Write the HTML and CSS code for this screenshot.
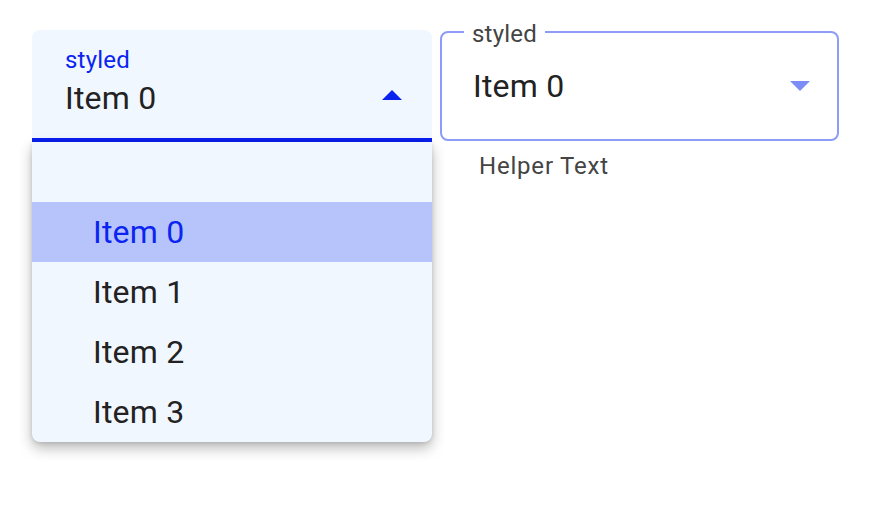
FILE: index.html
```html
<!DOCTYPE html>
<html>
<head>
<meta charset="utf-8">
<link rel="stylesheet" href="styles.css">
</head>
<body>
<div class="page">
  <div class="col-filled">
    <div class="filled">
      <div class="filled-label">styled</div>
      <div class="value-row">
        <span class="value">Item 0</span>
        <svg class="arrow" width="20" height="10" viewBox="0 0 20 10"><path d="M0 10 L10 0 L20 10 Z" fill="#0a22ee"/></svg>
      </div>
    </div>
    <div class="menu">
      <div class="menu-item empty"></div>
      <div class="menu-item selected">Item 0</div>
      <div class="menu-item">Item 1</div>
      <div class="menu-item">Item 2</div>
      <div class="menu-item">Item 3</div>
    </div>
  </div>
  <div class="col-outlined">
    <div class="outlined">
      <div class="outlined-label">styled</div>
      <div class="value-row outlined-row">
        <span class="value">Item 0</span>
        <svg class="arrow" width="20" height="10" viewBox="0 0 20 10"><path d="M0 0 L20 0 L10 10 Z" fill="#7b8cf6"/></svg>
      </div>
    </div>
    <div class="helper">Helper Text</div>
  </div>
</div>
</body>
</html>
```
FILE: styles.css
```css
html, body {
  margin: 0;
  padding: 0;
  background: #ffffff;
  font-family: Roboto, "Liberation Sans", sans-serif;
}
.page {
  display: flex;
  align-items: flex-start;
  gap: 8px;
  padding: 30px 0 60px 32px;
}
.col-filled {
  width: 400px;
  display: flex;
  flex-direction: column;
}
.filled {
  box-sizing: border-box;
  height: 112px;
  background: #f1f7fe;
  border-radius: 8px 8px 0 0;
  border-bottom: 4px solid #0a1ff0;
  padding: 18px 30px 0 33px;
}
.filled-label {
  font-size: 24px;
  line-height: 24px;
  color: #0b24f0;
  letter-spacing: 0.2px;
}
.value-row {
  display: flex;
  align-items: center;
  justify-content: space-between;
  margin-top: 10px;
}
.value {
  font-size: 32px;
  line-height: 32px;
  color: #222222;
  letter-spacing: 0.2px;
}
.filled .arrow {
  margin-top: -6px;
}
.menu {
  position: relative;
  z-index: 1;
  background: #f1f7fe;
  border-radius: 0 0 8px 8px;
  box-shadow: 0 6px 14px rgba(0, 0, 0, 0.28), 0 1px 4px rgba(0, 0, 0, 0.12);
  display: flex;
  flex-direction: column;
}
.menu-item {
  height: 60px;
  display: flex;
  align-items: center;
  padding-left: 61px;
  font-size: 32px;
  color: #222222;
  letter-spacing: 0.2px;
}
.menu-item.selected {
  background: #b7c4fc;
  color: #0b24f0;
}
.col-outlined {
  display: flex;
  flex-direction: column;
  margin-top: 1px;
}
.outlined {
  position: relative;
  box-sizing: border-box;
  width: 399px;
  height: 110px;
  border: 2px solid #8d9df7;
  border-radius: 8px;
  padding: 37px 27px 0 31px;
}
.outlined-row {
  margin-top: 0;
}
.outlined-label {
  position: absolute;
  top: -11px;
  left: 22px;
  padding: 0 8px;
  background: #ffffff;
  font-size: 24px;
  line-height: 24px;
  color: #444444;
  letter-spacing: 0.2px;
}
.helper {
  margin-top: 13px;
  padding-left: 39px;
  font-size: 24px;
  line-height: 24px;
  color: #444444;
  letter-spacing: 0.8px;
}
```
